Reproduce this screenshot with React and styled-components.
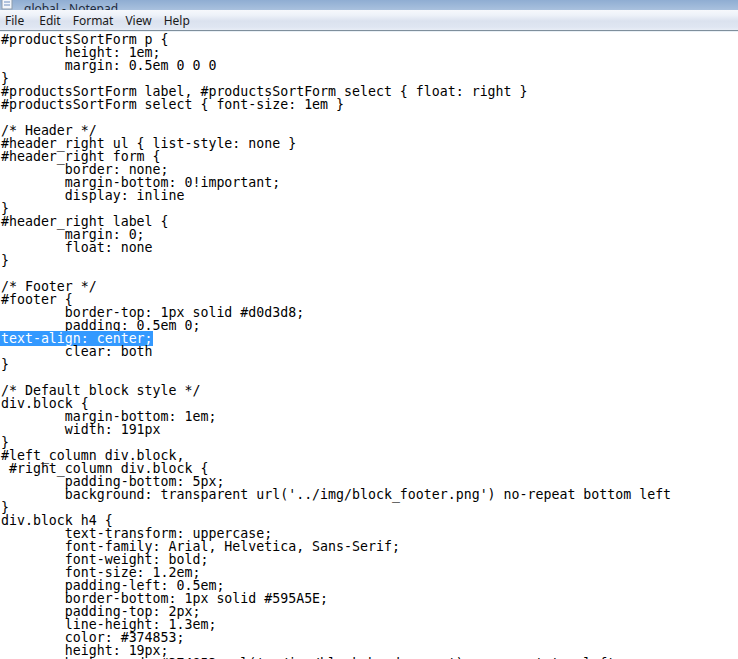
import React from 'react';
import styled, { createGlobalStyle } from 'styled-components';

const GlobalStyle = createGlobalStyle`
  html, body { margin: 0; padding: 0; background: #ffffff; }
  #root { width: 738px; height: 659px; overflow: hidden; }
`

const Window = styled.div`
  display: flex;
  flex-direction: column;
  width: 738px;
  height: 659px;
  overflow: hidden;
  background: #ffffff;
`

const TitleBar = styled.div`
  flex: 0 0 10px;
  height: 10px;
  display: flex;
  align-items: flex-end;
  gap: 11px;
  padding-left: 1px;
  overflow: hidden;
  background: linear-gradient(180deg, #8fadd2 0%, #a9c1de 100%);
`

const TitleText = styled.span`
  font-family: "Noto Sans", "Open Sans", sans-serif;
  font-size: 12px;
  line-height: 12px;
  color: #1e2b3c;
  margin-bottom: -5px;
`

const MenuBar = styled.div`
  flex: 0 0 20px;
  display: flex;
  align-items: center;
  padding-left: 0;
  background: linear-gradient(180deg, #f6f8fc 0%, #eef2f9 25%, #dbe2ef 55%, #dfe6f2 85%, #e8edf6 100%);
  border-bottom: 1px solid #7f8f9c;
`

const MenuItem = styled.span`
  font-family: "Noto Sans", "Open Sans", sans-serif;
  font-size: 12px;
  color: #1a1a1a;
  padding: 0 6px;
  margin-top: 1px;

  &:first-child {
    padding: 0 9px 0 5px;
  }
`

const Editor = styled.pre`
  flex: 1;
  margin: 0;
  padding: 1px 0 0 1px;
  border-top: 1px solid #e9f0f6;
  font-family: "DejaVu Sans Mono", "Liberation Mono", monospace;
  font-size: 13.25px;
  line-height: 13px;
  color: #000000;
  tab-size: 8;
  -moz-tab-size: 8;
  white-space: pre;
  overflow: hidden;
`

const Selected = styled.span`
  background: #3399ff;
  color: #ffffff;
  margin-left: -1px;
  padding-left: 1px;
`

const NotepadIcon = () => (
  <svg width="12" height="10" viewBox="0 0 12 10">
    <rect x="1" y="-4" width="10" height="13" fill="#f4f7fb" stroke="#8d9bab" strokeWidth="1" />
    <line x1="3" y1="2" x2="9" y2="2" stroke="#6f8fc0" />
    <line x1="3" y1="5" x2="9" y2="5" stroke="#6f8fc0" />
  </svg>
)

const before = `#productsSortForm p {
\theight: 1em;
\tmargin: 0.5em 0 0 0
}
#productsSortForm label, #productsSortForm select { float: right }
#productsSortForm select { font-size: 1em }

/* Header */
#header_right ul { list-style: none }
#header_right form {
\tborder: none;
\tmargin-bottom: 0!important;
\tdisplay: inline
}
#header_right label {
\tmargin: 0;
\tfloat: none
}

/* Footer */
#footer {
\tborder-top: 1px solid #d0d3d8;
\tpadding: 0.5em 0;
`

const after = `
\tclear: both
}

/* Default block style */
div.block {
\tmargin-bottom: 1em;
\twidth: 191px
}
#left_column div.block,
 #right_column div.block {
\tpadding-bottom: 5px;
\tbackground: transparent url('../img/block_footer.png') no-repeat bottom left
}
div.block h4 {
\ttext-transform: uppercase;
\tfont-family: Arial, Helvetica, Sans-Serif;
\tfont-weight: bold;
\tfont-size: 1.2em;
\tpadding-left: 0.5em;
\tborder-bottom: 1px solid #595A5E;
\tpadding-top: 2px;
\tline-height: 1.3em;
\tcolor: #374853;
\theight: 19px;
\tbackground: #374853 url('../img/block_header.png') no-repeat top left;
}`

export default function App() {
  return (
    <Window>
      <GlobalStyle />
      <TitleBar>
        <NotepadIcon />
        <TitleText>global - Notepad</TitleText>
      </TitleBar>
      <MenuBar>
        <MenuItem>File</MenuItem>
        <MenuItem>Edit</MenuItem>
        <MenuItem>Format</MenuItem>
        <MenuItem>View</MenuItem>
        <MenuItem>Help</MenuItem>
      </MenuBar>
      <Editor>
        {before}
        <Selected>text-align: center;</Selected>
        {after}
      </Editor>
    </Window>
  )
}
